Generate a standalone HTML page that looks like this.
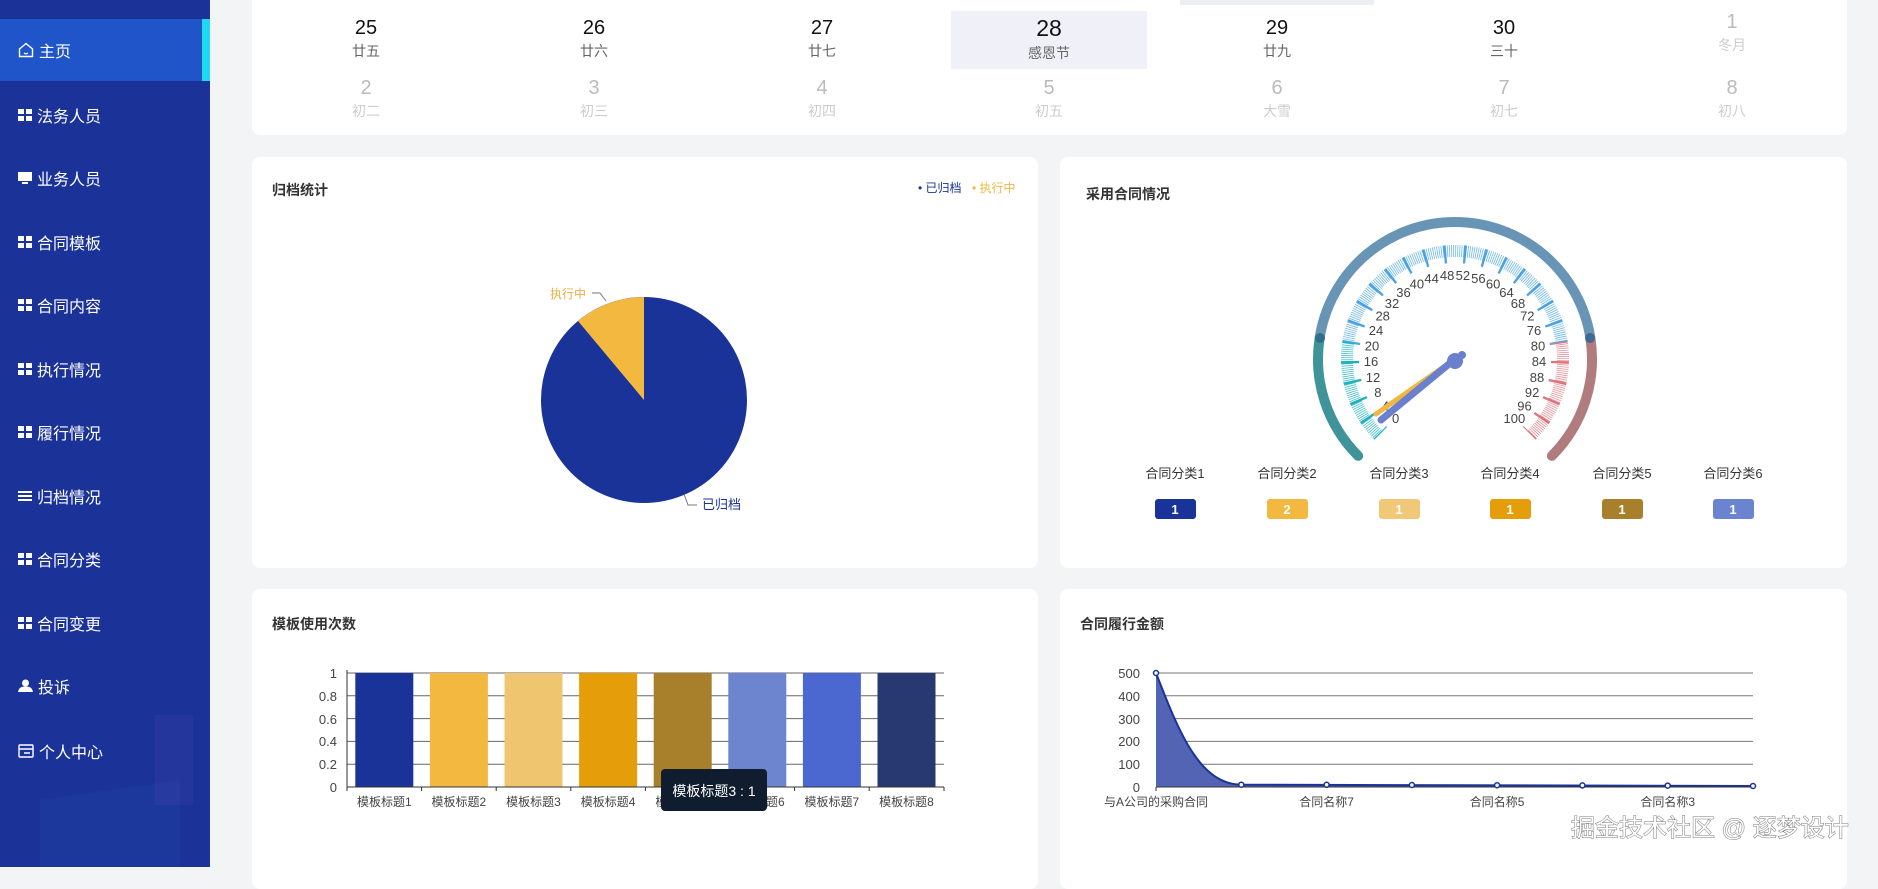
<!DOCTYPE html>
<html><head><meta charset="utf-8"><style>
*{margin:0;padding:0;box-sizing:border-box}
body{width:1878px;height:867px;overflow:hidden;background:#f3f4f6;font-family:"Liberation Sans","Noto Sans CJK SC",sans-serif;position:relative}
.side{position:absolute;left:0;top:0;width:210px;height:867px;background:#1b3399;overflow:hidden}
.item{position:absolute;left:0;width:210px;height:40px;color:#fff;font-size:16px;display:flex;align-items:center;padding-left:18px}
.item svg{margin-right:5px}
.active{background:#1f55c9;height:62px}
.active:after{content:"";position:absolute;right:0;top:0;width:8px;height:62px;background:#22d7f0}
.card{position:absolute;background:#fff;border-radius:8px}
.title{position:absolute;font-size:14px;font-weight:bold;color:#333}
.cal{position:absolute;text-align:center;width:120px}
.cal b{display:block;font-weight:normal;font-size:20px;color:#111}
.cal i{display:block;font-style:normal;font-size:14px;color:#666;margin-top:1px}
.g b{color:#bbb}.g i{color:#ccc}
svg text{font-family:"Liberation Sans","Noto Sans CJK SC",sans-serif}
</style></head><body>
<div class="side">
<div style="position:absolute;left:40px;top:790px;width:140px;height:110px;background:#2342a6;opacity:.35;transform:skewY(-8deg)"></div>
<div style="position:absolute;left:155px;top:715px;width:38px;height:90px;background:#3a3fa6;opacity:.3"></div>
<div class="item active" style="top:19px"><svg width="16" height="16" viewBox="0 0 16 16"><path d="M1.5 7 L8 1.5 L14.5 7 V14.5 H1.5Z M6 11 Q8 12.5 10 11" fill="none" stroke="#fff" stroke-width="1.4"/></svg>主页</div>
<div class="item" style="top:95px"><svg width="14" height="14"><rect x="0" y="1" width="6" height="5" fill="#fff"/><rect x="8" y="1" width="6" height="5" fill="#fff"/><rect x="0" y="8" width="6" height="5" fill="#fff"/><rect x="8" y="8" width="6" height="5" fill="#fff"/></svg>法务人员</div>
<div class="item" style="top:158px"><svg width="14" height="14"><rect x="0" y="1" width="14" height="9" fill="#fff"/><rect x="4" y="11" width="6" height="2" fill="#fff"/></svg>业务人员</div>
<div class="item" style="top:222px"><svg width="14" height="14"><rect x="0" y="1" width="6" height="5" fill="#fff"/><rect x="8" y="1" width="6" height="5" fill="#fff"/><rect x="0" y="8" width="6" height="5" fill="#fff"/><rect x="8" y="8" width="6" height="5" fill="#fff"/></svg>合同模板</div>
<div class="item" style="top:285px"><svg width="14" height="14"><rect x="0" y="1" width="6" height="5" fill="#fff"/><rect x="8" y="1" width="6" height="5" fill="#fff"/><rect x="0" y="8" width="6" height="5" fill="#fff"/><rect x="8" y="8" width="6" height="5" fill="#fff"/></svg>合同内容</div>
<div class="item" style="top:349px"><svg width="14" height="14"><rect x="0" y="1" width="6" height="5" fill="#fff"/><rect x="8" y="1" width="6" height="5" fill="#fff"/><rect x="0" y="8" width="6" height="5" fill="#fff"/><rect x="8" y="8" width="6" height="5" fill="#fff"/></svg>执行情况</div>
<div class="item" style="top:412px"><svg width="14" height="14"><rect x="0" y="1" width="6" height="5" fill="#fff"/><rect x="8" y="1" width="6" height="5" fill="#fff"/><rect x="0" y="8" width="6" height="5" fill="#fff"/><rect x="8" y="8" width="6" height="5" fill="#fff"/></svg>履行情况</div>
<div class="item" style="top:476px"><svg width="14" height="14"><rect x="0" y="2" width="14" height="2" fill="#fff"/><rect x="0" y="6" width="14" height="2" fill="#fff"/><rect x="0" y="10" width="14" height="2" fill="#fff"/></svg>归档情况</div>
<div class="item" style="top:539px"><svg width="14" height="14"><rect x="0" y="1" width="6" height="5" fill="#fff"/><rect x="8" y="1" width="6" height="5" fill="#fff"/><rect x="0" y="8" width="6" height="5" fill="#fff"/><rect x="8" y="8" width="6" height="5" fill="#fff"/></svg>合同分类</div>
<div class="item" style="top:603px"><svg width="14" height="14"><rect x="0" y="1" width="6" height="5" fill="#fff"/><rect x="8" y="1" width="6" height="5" fill="#fff"/><rect x="0" y="8" width="6" height="5" fill="#fff"/><rect x="8" y="8" width="6" height="5" fill="#fff"/></svg>合同变更</div>
<div class="item" style="top:666px"><svg width="15" height="14"><circle cx="7.5" cy="4" r="3.5" fill="#fff"/><path d="M0 13 Q1 7 7.5 7.5 Q14 7 15 13Z" fill="#fff"/></svg>投诉</div>
<div class="item" style="top:731px"><svg width="16" height="14"><rect x="1" y="1" width="14" height="12" rx="1" fill="none" stroke="#fff" stroke-width="1.4"/><path d="M1 5 H15 M6 9 H12" stroke="#fff" stroke-width="1.4"/></svg>个人中心</div>
</div>

<div class="card" style="left:252px;top:-10px;width:1595px;height:145px"></div>
<div style="position:absolute;left:1180px;top:0;width:194px;height:5px;background:#eceef2"></div>
<div style="position:absolute;left:951px;top:11px;width:196px;height:58px;background:#eff0f8"></div>
<div class="cal" style="left:306px;top:17px"><b>25</b><i>廿五</i></div>
<div class="cal" style="left:534px;top:17px"><b>26</b><i>廿六</i></div>
<div class="cal" style="left:762px;top:17px"><b>27</b><i>廿七</i></div>
<div class="cal" style="left:989px;top:15px"><b style="font-size:23px">28</b><i>感恩节</i></div>
<div class="cal" style="left:1217px;top:17px"><b>29</b><i>廿九</i></div>
<div class="cal" style="left:1444px;top:17px"><b>30</b><i>三十</i></div>
<div class="cal g" style="left:1672px;top:11px"><b>1</b><i>冬月</i></div>
<div class="cal g" style="left:306px;top:77px"><b>2</b><i>初二</i></div>
<div class="cal g" style="left:534px;top:77px"><b>3</b><i>初三</i></div>
<div class="cal g" style="left:762px;top:77px"><b>4</b><i>初四</i></div>
<div class="cal g" style="left:989px;top:77px"><b>5</b><i>初五</i></div>
<div class="cal g" style="left:1217px;top:77px"><b>6</b><i>大雪</i></div>
<div class="cal g" style="left:1444px;top:77px"><b>7</b><i>初七</i></div>
<div class="cal g" style="left:1672px;top:77px"><b>8</b><i>初八</i></div>

<div class="card" style="left:252px;top:157px;width:786px;height:411px"></div>
<div class="card" style="left:1060px;top:157px;width:787px;height:411px"></div>
<div class="card" style="left:252px;top:589px;width:786px;height:300px"></div>
<div class="card" style="left:1060px;top:589px;width:787px;height:300px"></div>
<div class="title" style="left:272px;top:180px">归档统计</div>
<div class="title" style="left:1086px;top:184px">采用合同情况</div>
<div class="title" style="left:272px;top:614px">模板使用次数</div>
<div class="title" style="left:1080px;top:614px">合同履行金额</div>

<svg style="position:absolute;left:0;top:0" width="1878" height="867">
<text x="918" y="192" font-size="12" fill="#1b3399">• 已归档</text>
<text x="972" y="192" font-size="12" fill="#f0b840">• 执行中</text>
<circle cx="644" cy="400" r="103" fill="#1a3399"/>
<path d="M644 400 L644 297 A103 103 0 0 0 578 321 Z" fill="#f2b840"/>
<path d="M606 301 L600 293 H592" fill="none" stroke="#777"/>
<text x="550" y="298" font-size="12" fill="#e8b040">执行中</text>
<path d="M684 494 L688 505 H697" fill="none" stroke="#777"/>
<text x="702" y="509" font-size="13" fill="#1b3399">已归档</text>

<g fill="none" stroke-width="10">
<path d="M1358.13 455.87 A137 137 0 0 1 1319.69 337.57" stroke="#3f9499" stroke-linecap="round"/>
<path d="M1319.69 337.57 A137 137 0 0 1 1590.31 337.57" stroke="#6894b6"/>
<path d="M1590.31 337.57 A137 137 0 0 1 1551.87 455.87" stroke="#b07c7e" stroke-linecap="round"/>
<circle cx="1320" cy="338" r="5" fill="#2f6f88" stroke="none"/>
<circle cx="1590" cy="338" r="5" fill="#3d6a92" stroke="none"/>
</g>
<g fill="none">
<path d="M1378.63 435.37 A108 108 0 0 1 1348.33 342.10" stroke="#2ab9c5" stroke-width="12" stroke-dasharray="0.7 1.34"/>
<path d="M1348.33 342.10 A108 108 0 0 1 1561.67 342.10" stroke="#5badea" stroke-width="12" stroke-dasharray="0.7 1.34"/>
<path d="M1561.67 342.10 A108 108 0 0 1 1531.37 435.37" stroke="#e5838c" stroke-width="12" stroke-dasharray="0.7 1.34"/>
<path d="M1380.75 433.25 A105 105 0 0 1 1351.29 342.58" stroke="#1fb0bd" stroke-width="18" stroke-dasharray="2.5 17.29" stroke-dashoffset="1.25"/>
<path d="M1351.29 342.58 A105 105 0 0 1 1558.71 342.58" stroke="#4aa2e6" stroke-width="18" stroke-dasharray="2.5 17.29" stroke-dashoffset="1.25"/>
<path d="M1558.71 342.58 A105 105 0 0 1 1529.25 433.25" stroke="#de7480" stroke-width="18" stroke-dasharray="2.5 17.29" stroke-dashoffset="1.25"/>
</g>
<g font-size="13" fill="#444" text-anchor="middle" dominant-baseline="central">
<text x="1395.6" y="418.4">0</text><text x="1385.5" y="406.2">4</text><text x="1377.9" y="392.4">8</text><text x="1373" y="377.3">12</text><text x="1371" y="361.6">16</text><text x="1372" y="345.9">20</text><text x="1376" y="330.5">24</text><text x="1382.7" y="316.2">28</text><text x="1392" y="303.5">32</text><text x="1403.5" y="292.6">36</text><text x="1416.9" y="284.2">40</text><text x="1431.6" y="278.3">44</text><text x="1447.1" y="275.4">48</text><text x="1462.9" y="275.4">52</text><text x="1478.4" y="278.3">56</text><text x="1493.1" y="284.2">60</text><text x="1506.5" y="292.6">64</text><text x="1518" y="303.5">68</text><text x="1527.3" y="316.2">72</text><text x="1534" y="330.5">76</text><text x="1538" y="345.9">80</text><text x="1539" y="361.6">84</text><text x="1537" y="377.3">88</text><text x="1532.1" y="392.4">92</text><text x="1524.5" y="406.2">96</text><text x="1514.4" y="418.4">100</text>
</g>
<line x1="1455" y1="359" x2="1376" y2="414" stroke="#f0b840" stroke-width="5" stroke-linecap="round"/>
<line x1="1455" y1="359" x2="1381" y2="420" stroke="#6a80cf" stroke-width="7" stroke-linecap="round"/>
<circle cx="1455" cy="361" r="8" fill="#6a80cf"/><circle cx="1462" cy="355" r="4" fill="#6a80cf"/>
<g font-size="13" fill="#333" text-anchor="middle">
<text x="1175" y="478">合同分类1</text><text x="1287" y="478">合同分类2</text><text x="1399" y="478">合同分类3</text><text x="1510" y="478">合同分类4</text><text x="1622" y="478">合同分类5</text><text x="1733" y="478">合同分类6</text>
</g>
<g>
<rect x="1155" y="499" width="41" height="20" rx="3" fill="#1a3399"/><rect x="1267" y="499" width="41" height="20" rx="3" fill="#f2b840"/><rect x="1379" y="499" width="41" height="20" rx="3" fill="#f0c878"/><rect x="1490" y="499" width="41" height="20" rx="3" fill="#e59e0a"/><rect x="1602" y="499" width="41" height="20" rx="3" fill="#a8802c"/><rect x="1713" y="499" width="41" height="20" rx="3" fill="#6b84cf"/>
</g>
<g font-size="13" font-weight="bold" fill="#fff" text-anchor="middle">
<text x="1175" y="514">1</text><text x="1287" y="514">2</text><text x="1399" y="514">1</text><text x="1510" y="514">1</text><text x="1622" y="514">1</text><text x="1733" y="514">1</text>
</g>

<g stroke="#666" stroke-width="1">
<line x1="347" y1="673" x2="944" y2="673"/><line x1="347" y1="695.8" x2="944" y2="695.8"/><line x1="347" y1="718.6" x2="944" y2="718.6"/><line x1="347" y1="741.4" x2="944" y2="741.4"/><line x1="347" y1="764.2" x2="944" y2="764.2"/>
</g>
<rect x="355.3" y="673" width="58" height="114" fill="#1a3399"/>
<rect x="429.9" y="673" width="58" height="114" fill="#f2b840"/>
<rect x="504.5" y="673" width="58" height="114" fill="#f0c570"/>
<rect x="579.1" y="673" width="58" height="114" fill="#e59e0a"/>
<rect x="653.7" y="673" width="58" height="114" fill="#a8802c"/>
<rect x="728.3" y="673" width="58" height="114" fill="#6d84cf"/>
<rect x="802.9" y="673" width="58" height="114" fill="#4a68cf"/>
<rect x="877.5" y="673" width="58" height="114" fill="#283870"/>
<g stroke="#333"><line x1="347" y1="787" x2="944" y2="787"/><line x1="347" y1="670" x2="347" y2="791"/>
<line x1="421.6" y1="787" x2="421.6" y2="791"/><line x1="496.2" y1="787" x2="496.2" y2="791"/><line x1="570.8" y1="787" x2="570.8" y2="791"/><line x1="645.4" y1="787" x2="645.4" y2="791"/><line x1="720" y1="787" x2="720" y2="791"/><line x1="794.6" y1="787" x2="794.6" y2="791"/><line x1="869.2" y1="787" x2="869.2" y2="791"/><line x1="944" y1="787" x2="944" y2="791"/></g>
<g font-size="13" fill="#444" text-anchor="end">
<text x="337" y="678">1</text><text x="337" y="701">0.8</text><text x="337" y="724">0.6</text><text x="337" y="746">0.4</text><text x="337" y="769">0.2</text><text x="337" y="792">0</text>
</g>
<g font-size="12" fill="#444" text-anchor="middle">
<text x="384.3" y="806">模板标题1</text><text x="458.9" y="806">模板标题2</text><text x="533.5" y="806">模板标题3</text><text x="608.1" y="806">模板标题4</text><text x="682.7" y="806">模板标题5</text><text x="757.3" y="806">模板标题6</text><text x="831.9" y="806">模板标题7</text><text x="906.5" y="806">模板标题8</text>
</g>
<rect x="661" y="769" width="106" height="42" rx="4" fill="#0f1d2e"/>
<text x="714" y="796" font-size="14" fill="#fff" text-anchor="middle">模板标题3 : 1</text>

<g stroke="#777" stroke-width="1">
<line x1="1156" y1="673" x2="1753" y2="673"/><line x1="1156" y1="695.8" x2="1753" y2="695.8"/><line x1="1156" y1="718.6" x2="1753" y2="718.6"/><line x1="1156" y1="741.4" x2="1753" y2="741.4"/><line x1="1156" y1="764.2" x2="1753" y2="764.2"/>
</g>
<path d="M1156 673 C1180 735 1200 784 1241.3 784.7 L1753 786 L1753 787 L1156 787Z" fill="#5464b4"/>
<path d="M1156 673 C1180 735 1200 784 1241.3 784.7 L1753 786" fill="none" stroke="#1a3399" stroke-width="2"/>
<g stroke="#333"><line x1="1156" y1="787" x2="1753" y2="787"/><line x1="1156" y1="787" x2="1156" y2="791"/></g>
<g fill="#fff" stroke="#1a3399" stroke-width="1.5">
<circle cx="1156" cy="673" r="2.5"/><circle cx="1241.3" cy="784.7" r="2.5"/><circle cx="1326.6" cy="784.8" r="2.5"/><circle cx="1411.9" cy="785" r="2.5"/><circle cx="1497.1" cy="785.2" r="2.5"/><circle cx="1582.4" cy="785.4" r="2.5"/><circle cx="1667.7" cy="785.6" r="2.5"/><circle cx="1753" cy="786" r="2.5"/>
</g>
<g font-size="13" fill="#444" text-anchor="end">
<text x="1140" y="678">500</text><text x="1140" y="701">400</text><text x="1140" y="724">300</text><text x="1140" y="746">200</text><text x="1140" y="769">100</text><text x="1140" y="792">0</text>
</g>
<g font-size="12" fill="#444" text-anchor="middle">
<text x="1156" y="806">与A公司的采购合同</text><text x="1326.6" y="806">合同名称7</text><text x="1497.1" y="806">合同名称5</text><text x="1667.7" y="806">合同名称3</text>
</g>
<text x="1571" y="836" font-size="24" fill="#fff" stroke="#777" stroke-width="1" paint-order="stroke">掘金技术社区 @ 逐梦设计</text>
</svg>
</body></html>
